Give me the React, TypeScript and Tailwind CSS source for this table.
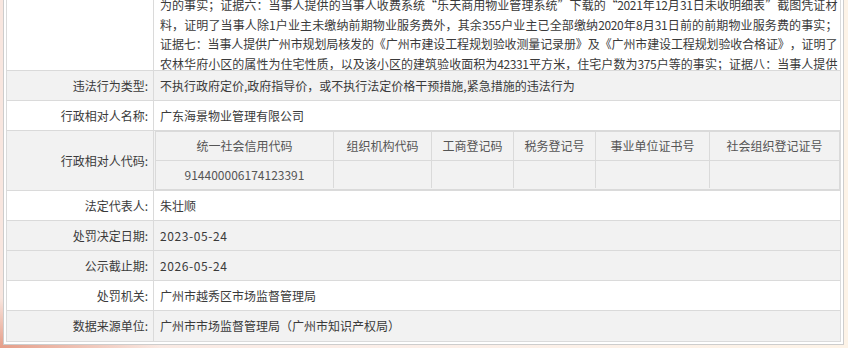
import React from "react";

const topLines = [
  "为的事实；证据六：当事人提供的当事人收费系统“乐天商用物业管理系统”下载的“2021年12月31日未收明细表”截图凭证材",
  "料，证明了当事人除1户业主未缴纳前期物业服务费外，其余355户业主已全部缴纳2020年8月31日前的前期物业服务费的事实；",
  "证据七：当事人提供广州市规划局核发的《广州市建设工程规划验收测量记录册》及《广州市建设工程规划验收合格证》，证明了",
  "农林华府小区的属性为住宅性质，以及该小区的建筑验收面积为42331平方米，住宅户数为375户等的事实；证据八：当事人提供",
];

const codeHeaders = [
  "统一社会信用代码",
  "组织机构代码",
  "工商登记码",
  "税务登记号",
  "事业单位证书号",
  "社会组织登记证号",
];
const codeValues = ["914400006174123391", "", "", "", "", ""];

function Row({
  label,
  value,
  gray,
  last,
  spaced,
}: {
  label: string;
  value: string;
  gray?: boolean;
  last?: boolean;
  spaced?: boolean;
}) {
  return (
    <div
      className={`flex h-[30px] ${last ? "" : "border-b border-[#dadada]"} ${
        gray ? "bg-[#f2f2f2]" : "bg-white"
      }`}
    >
      <div className="w-[147px] shrink-0 border-r border-[#dadada] flex items-center justify-end pr-[5px]">
        {label}
      </div>
      <div className={`flex-1 flex items-center pl-[6px] ${spaced ? "tracking-[0.6px]" : ""}`}>
        {value}
      </div>
    </div>
  );
}

export default function App() {
  return (
    <div
      lang="zh-CN"
      className="w-[848px] h-[348px] overflow-hidden bg-[radial-gradient(ellipse_160px_50px_at_0%_100%,#e59d88_0%,rgba(229,157,136,0)_100%),linear-gradient(90deg,#f8e6df_0%,#fbeee8_45%,#fdf3e7_100%)] font-['Noto_Sans_CJK_SC',sans-serif] text-[12px] text-[#3a3a3a] [text-spacing-trim:space-all]"
    >
      <div className="ml-[3px] mt-[-30px] w-[841px] border border-[#cdcdcd] bg-white p-[2px]">
        <div className="border border-[#dadada]">
          {/* top row: evidence text */}
          <div className="flex h-[97px] border-b border-[#dadada] bg-white overflow-hidden">
            <div className="w-[147px] shrink-0 border-r border-[#dadada]" />
            <div className="flex-1 min-w-0 flex flex-col justify-end pl-[6px] pr-[3px]">
              <div className="mb-[-3px] leading-[19.5px] tracking-[-0.4px]">
                {topLines.map((l, i) => (
                  <div key={i} className="text-justify [text-align-last:justify] whitespace-nowrap">
                    {l}
                  </div>
                ))}
              </div>
            </div>
          </div>

          <Row
            label="违法行为类型:"
            value="不执行政府定价,政府指导价，或不执行法定价格干预措施,紧急措施的违法行为"
            gray
          />
          <Row label="行政相对人名称:" value="广东海景物业管理有限公司" />

          {/* code row */}
          <div className="flex h-[60px] border-b border-[#dadada] bg-[#f2f2f2]">
            <div className="w-[147px] shrink-0 border-r border-[#dadada] flex items-center justify-end pr-[5px]">
              行政相对人代码:
            </div>
            <div className="flex-1 pl-[1px]">
              <div className="w-[685px] h-[59px] border border-[#dadada] grid grid-cols-[178px_98px_82px_82px_114px_129px] grid-rows-[29px_27px] text-[#555]">
                {codeHeaders.map((h, i) => (
                  <div
                    key={h}
                    className={`flex items-center justify-center border-b border-[#dadada] ${
                      i < 5 ? "border-r" : ""
                    }`}
                  >
                    {h}
                  </div>
                ))}
                {codeValues.map((v, i) => (
                  <div
                    key={i}
                    className={`flex items-center justify-center border-[#dadada] ${
                      i < 5 ? "border-r" : ""
                    }`}
                  >
                    {v}
                  </div>
                ))}
              </div>
            </div>
          </div>

          <Row label="法定代表人:" value="朱壮顺" />
          <Row label="处罚决定日期:" value="2023-05-24" gray spaced />
          <Row label="公示截止期:" value="2026-05-24" gray spaced />
          <Row label="处罚机关:" value="广州市越秀区市场监督管理局" />
          <Row label="数据来源单位:" value="广州市市场监督管理局（广州市知识产权局）" gray last />
        </div>
      </div>
    </div>
  );
}
